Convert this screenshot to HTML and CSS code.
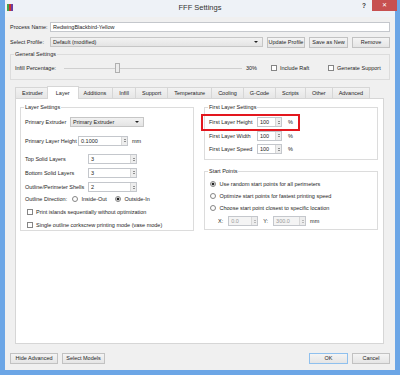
FILE: index.html
```html
<!DOCTYPE html>
<html lang="en">
<head>
  <meta charset="UTF-8">
  <meta name="viewport" content="width=device-width, initial-scale=1.0">
  <title>FFF Settings</title>
  <link rel="stylesheet" href="styles.css">
</head>
<body>
  <div class="window">
    <!-- Title bar -->
    <div class="titlebar">
      <svg class="app-icon" width="6" height="7" viewBox="0 0 6 7">
        <rect x="0" y="0" width="2" height="7" fill="#3fa34d"></rect>
        <rect x="2" y="0" width="2" height="7" fill="#d0312d"></rect>
        <rect x="4" y="0" width="2" height="7" fill="#6a3fa0"></rect>
      </svg>
      <span class="title">FFF Settings</span>
      <div class="caption-buttons">
        <span class="help">?</span>
        <span class="close">&#x2715;</span>
      </div>
    </div>

    <div class="content">
      <div class="field-row">
        <span class="row-label">Process Name:</span>
        <div class="textbox">RedwingBlackbird-Yellow</div>
      </div>
      <div class="field-row">
        <span class="row-label">Select Profile:</span>
        <div class="combo profile-combo"><span>Default (modified)</span><span class="arrow"></span></div>
        <button class="btn">Update Profile</button>
        <button class="btn btn-save">Save as New</button>
        <button class="btn">Remove</button>
      </div>

      <!-- General Settings -->
      <fieldset class="group general">
        <legend>General Settings</legend>
        <div class="field-row">
          <span class="infill-label">Infill Percentage:</span>
          <div class="slider"><div class="slider-handle"></div></div>
          <span class="percent">30%</span>
          <span class="check raft"><span class="check-box"></span>Include Raft</span>
          <span class="check"><span class="check-box"></span>Generate Support</span>
        </div>
      </fieldset>

      <!-- Tabs -->
      <div class="tabs">
        <div class="tab-bar">
          <span class="tab">Extruder</span>
          <span class="tab active">Layer</span>
          <span class="tab">Additions</span>
          <span class="tab">Infill</span>
          <span class="tab">Support</span>
          <span class="tab">Temperature</span>
          <span class="tab">Cooling</span>
          <span class="tab">G-Code</span>
          <span class="tab">Scripts</span>
          <span class="tab">Other</span>
          <span class="tab">Advanced</span>
        </div>
        <div class="tab-pane">
          <div class="column">
            <fieldset class="group layer-group">
              <legend>Layer Settings</legend>
              <div class="form-row">
                <span class="label extruder-label">Primary Extruder</span>
                <div class="combo extruder-combo"><span>Primary Extruder</span><span class="arrow"></span></div>
              </div>
              <div class="form-row gap-big">
                <span class="label height-label">Primary Layer Height</span>
                <div class="spin spin-height">
                  <span class="spin-value">0.1000</span>
                  <span class="spin-arrows"><i class="up"></i><i class="down"></i></span>
                </div>
                <span class="unit">mm</span>
              </div>
              <div class="form-row gap-big">
                <span class="label">Top Solid Layers</span>
                <div class="spin spin-layers">
                  <span class="spin-value">3</span>
                  <span class="spin-arrows"><i class="up"></i><i class="down"></i></span>
                </div>
              </div>
              <div class="form-row gap-small">
                <span class="label">Bottom Solid Layers</span>
                <div class="spin spin-layers">
                  <span class="spin-value">3</span>
                  <span class="spin-arrows"><i class="up"></i><i class="down"></i></span>
                </div>
              </div>
              <div class="form-row gap-mid">
                <span class="label">Outline/Perimeter Shells</span>
                <div class="spin spin-layers">
                  <span class="spin-value">2</span>
                  <span class="spin-arrows"><i class="up"></i><i class="down"></i></span>
                </div>
              </div>
              <div class="form-row short gap-tight">
                <span class="label direction-label">Outline Direction:</span>
                <span class="option"><span class="radio"></span>Inside-Out</span>
                <span class="option"><span class="radio on"></span>Outside-In</span>
              </div>
              <div class="form-row short gap-check">
                <span class="check indent"><span class="check-box"></span>Print islands sequentially without optimization</span>
              </div>
              <div class="form-row short gap-check">
                <span class="check indent"><span class="check-box"></span>Single outline corkscrew printing mode (vase mode)</span>
              </div>
            </fieldset>
          </div>

          <div class="column">
            <fieldset class="group first-layer">
              <legend>First Layer Settings</legend>
              <div class="form-row">
                <span class="highlight"></span>
                <span class="label first-label">First Layer Height</span>
                <div class="spin spin-percent">
                  <span class="spin-value">100</span>
                  <span class="spin-arrows"><i class="up"></i><i class="down"></i></span>
                </div>
                <span class="unit pct">%</span>
              </div>
              <div class="form-row gap-small">
                <span class="label first-label">First Layer Width</span>
                <div class="spin spin-percent">
                  <span class="spin-value">100</span>
                  <span class="spin-arrows"><i class="up"></i><i class="down"></i></span>
                </div>
                <span class="unit pct">%</span>
              </div>
              <div class="form-row gap-small">
                <span class="label first-label">First Layer Speed</span>
                <div class="spin spin-percent">
                  <span class="spin-value">100</span>
                  <span class="spin-arrows"><i class="up"></i><i class="down"></i></span>
                </div>
                <span class="unit pct">%</span>
              </div>
            </fieldset>

            <fieldset class="group start-points">
              <legend>Start Points</legend>
              <div class="form-row short">
                <span class="option"><span class="radio on"></span>Use random start points for all perimeters</span>
              </div>
              <div class="form-row short gap-radio">
                <span class="option"><span class="radio"></span>Optimize start points for fastest printing speed</span>
              </div>
              <div class="form-row short gap-radio">
                <span class="option"><span class="radio"></span>Choose start point closest to specific location</span>
              </div>
              <div class="form-row gap-radio coords">
                <span class="coord-label">X:</span>
                <div class="spin spin-x disabled">
                  <span class="spin-value">0.0</span>
                  <span class="spin-arrows"><i class="up"></i><i class="down"></i></span>
                </div>
                <span class="coord-label">Y:</span>
                <div class="spin spin-y disabled">
                  <span class="spin-value">300.0</span>
                  <span class="spin-arrows"><i class="up"></i><i class="down"></i></span>
                </div>
                <span class="unit">mm</span>
              </div>
            </fieldset>
          </div>
        </div>
      </div>

      <!-- Dialog buttons -->
      <div class="footer">
        <button class="btn btn-hide">Hide Advanced</button>
        <button class="btn btn-select">Select Models</button>
        <span class="spacer"></span>
        <button class="btn btn-default">OK</button>
        <button class="btn">Cancel</button>
      </div>
    </div>
  </div>
</body>
</html>
```

FILE: styles.css
```css
/* styles.css */
body {
  margin: 0;
  font-family: "Liberation Sans", Arial, sans-serif;
  font-size: 5.5px;
  color: #1e1e1e;
}

.window {
  width: 400px;
  height: 375px;
  box-sizing: border-box;
  background-color: #6ca6e6;
  padding: 0 5px 5px;
  display: flex;
  flex-direction: column;
}

/* Title bar */
.titlebar {
  height: 17px;
  flex: none;
  background-color: #eef2f7;
  display: grid;
  grid-template-columns: 1fr auto 1fr;
  align-items: start;
}

.app-icon {
  margin: 4px 0 0 2px;
}

.title {
  font-size: 7.5px;
  line-height: 16px;
  color: #333;
}

.caption-buttons {
  justify-self: end;
  display: flex;
  align-items: flex-start;
  margin-right: -2px;
}

.help {
  font-weight: bold;
  font-size: 6.5px;
  line-height: 12px;
  color: #3a3a3a;
  margin-right: 6px;
}

.close {
  width: 25px;
  height: 11px;
  background-color: #c75050;
  color: #fff;
  text-align: center;
  font-size: 6px;
  line-height: 11px;
}

/* Dialog body */
.content {
  flex: 1;
  background-color: #f0f0f0;
  padding: 5px 5px 6px;
  display: flex;
  flex-direction: column;
}

.field-row {
  display: flex;
  align-items: center;
  height: 10px;
  gap: 4px;
  white-space: nowrap;
}

.field-row + .field-row {
  margin-top: 5px;
}

.row-label {
  width: 36px;
  flex: none;
}

.textbox {
  flex: 1;
  height: 10px;
  box-sizing: border-box;
  border: 1px solid #c4c7cc;
  background-color: #fff;
  padding-left: 2px;
  line-height: 8px;
}

.combo {
  height: 10px;
  box-sizing: border-box;
  border: 1px solid #c6c6c6;
  background: linear-gradient(#f2f2f2, #e4e4e4);
  padding: 0 4px 0 2px;
  display: flex;
  align-items: center;
  justify-content: space-between;
}

.profile-combo {
  flex: 1;
}

.arrow {
  width: 0;
  height: 0;
  border-left: 2px solid transparent;
  border-right: 2px solid transparent;
  border-top: 2px solid #222;
}

.btn {
  font: inherit;
  color: #1e1e1e;
  height: 11px;
  width: 38px;
  box-sizing: border-box;
  border: 1px solid #c2c2c2;
  background: linear-gradient(#f4f4f4, #e5e5e5);
  padding: 0;
  line-height: 9px;
  flex: none;
}

.btn-save {
  width: 39px;
}

.btn-hide {
  width: 48px;
}

.btn-select {
  width: 43px;
}

.btn-default {
  width: 39px;
  border-color: #8fc0ee;
}

/* Group boxes */
.group {
  margin: 0;
  border: 1px solid #dcdcdc;
  min-width: 0;
}

.group legend {
  padding: 0 1px;
  line-height: 7px;
  margin-left: -1px;
}

.general {
  margin-top: 3.5px;
  padding: 5.5px 0 6px 4px;
}

.infill-label {
  width: 45px;
}

.slider {
  width: 178px;
  height: 10px;
  flex: none;
  display: flex;
  align-items: center;
  padding-left: 51px;
  box-sizing: border-box;
  background: linear-gradient(#cfcfcf, #cfcfcf) center / 100% 1px no-repeat;
}

.slider-handle {
  width: 5px;
  height: 10px;
  box-sizing: border-box;
  border: 1px solid #b0b0b0;
  background-color: #ececec;
}

.percent {
  width: 11px;
  margin-right: 10px;
}

.check {
  display: flex;
  align-items: center;
  gap: 3px;
}

.raft {
  width: 53px;
}

.check-box {
  width: 6px;
  height: 6px;
  flex: none;
  box-sizing: border-box;
  border: 1px solid #858585;
  background-color: #fff;
}

/* Tabs */
.tabs {
  flex: 1;
  display: flex;
  flex-direction: column;
  margin: 6px 6px 0 5px;
}

.tab-bar {
  height: 12px;
  display: flex;
  align-items: flex-end;
  flex: none;
}

.tab {
  height: 11px;
  box-sizing: border-box;
  border: 1px solid #d6d6d6;
  border-bottom: none;
  background: linear-gradient(#f2f2f2, #e6e6e6);
  padding: 0 6px;
  line-height: 10px;
  margin-right: -1px;
  white-space: nowrap;
}

.tab.active {
  height: 13px;
  background: #fff;
  margin: 0 -2px -1px;
  padding: 0 8px;
  line-height: 12px;
  position: relative;
  z-index: 1;
}

.tab-pane {
  flex: 1;
  background-color: #fff;
  border: 1px solid #d6d6d6;
  padding: 4.5px 5px 0 4px;
  display: grid;
  grid-template-columns: 1fr 1fr;
  column-gap: 10px;
  align-items: start;
}

.column {
  display: flex;
  flex-direction: column;
}

.layer-group {
  padding: 6.5px 4px 1px;
}

.form-row {
  display: flex;
  align-items: center;
  height: 10px;
  position: relative;
  white-space: nowrap;
}

.form-row.short {
  height: 8px;
}

.gap-big { margin-top: 8.5px; }
.gap-small { margin-top: 3.5px; }
.gap-mid { margin-top: 4.5px; }
.gap-tight { margin-top: 3px; }
.gap-check { margin-top: 5px; }
.gap-radio { margin-top: 4px; }

.label {
  width: 63px;
  flex: none;
}

.extruder-label {
  width: 45px;
}

.height-label {
  width: 53px;
}

.direction-label {
  width: 47px;
}

.extruder-combo {
  width: 74px;
}

.spin {
  height: 10px;
  flex: none;
  box-sizing: border-box;
  border: 1px solid #c4c7cc;
  background-color: #fff;
  display: flex;
  align-items: stretch;
  justify-content: space-between;
}

.spin-value {
  padding-left: 2px;
  line-height: 8px;
}

.spin-arrows {
  width: 5px;
  background-color: #ededed;
  border-left: 1px solid #d8d8d8;
  display: flex;
  flex-direction: column;
  align-items: center;
  justify-content: center;
  gap: 1px;
}

.spin-arrows i {
  width: 0;
  height: 0;
  border-left: 1.5px solid transparent;
  border-right: 1.5px solid transparent;
}

.spin-arrows .up {
  border-bottom: 1.5px solid #333;
}

.spin-arrows .down {
  border-top: 1.5px solid #333;
}

.spin-height { width: 50px; }
.spin-layers { width: 49px; }
.spin-percent { width: 25px; }
.spin-x { width: 30px; }
.spin-y { width: 33px; }

.spin.disabled {
  background-color: #f4f4f4;
  color: #9a9a9a;
}

.spin.disabled .spin-arrows i {
  border-bottom-color: #888;
  border-top-color: #888;
}

.unit {
  margin-left: 4px;
}

.unit.pct {
  margin-left: 6px;
}

.option {
  display: flex;
  align-items: center;
  gap: 3.5px;
  margin-right: 8px;
}

.radio {
  width: 6px;
  height: 6px;
  flex: none;
  box-sizing: border-box;
  border-radius: 50%;
  border: 1px solid #858585;
  background-color: #fff;
}

.radio.on {
  background: radial-gradient(circle, #222 1.2px, #fff 1.7px);
}

.check.indent {
  margin-left: 2px;
}

/* First layer / start points */
.first-layer {
  padding: 6.5px 4px 5px;
}

.first-label {
  width: 48px;
}

.highlight {
  position: absolute;
  left: -8px;
  top: -3px;
  width: 99px;
  height: 17px;
  box-sizing: border-box;
  border: 2px solid #e3171e;
}

.start-points {
  margin-top: 7.5px;
  padding: 5.5px 4px 3px;
}

.start-points .option {
  margin-left: 1px;
}

.coords {
  padding-left: 9px;
  gap: 5px;
}

.coords .unit {
  margin-left: -1px;
}

/* Footer */
.footer {
  display: flex;
  gap: 4px;
  margin-top: 9px;
  flex: none;
}

.spacer {
  flex: 1;
}
```
